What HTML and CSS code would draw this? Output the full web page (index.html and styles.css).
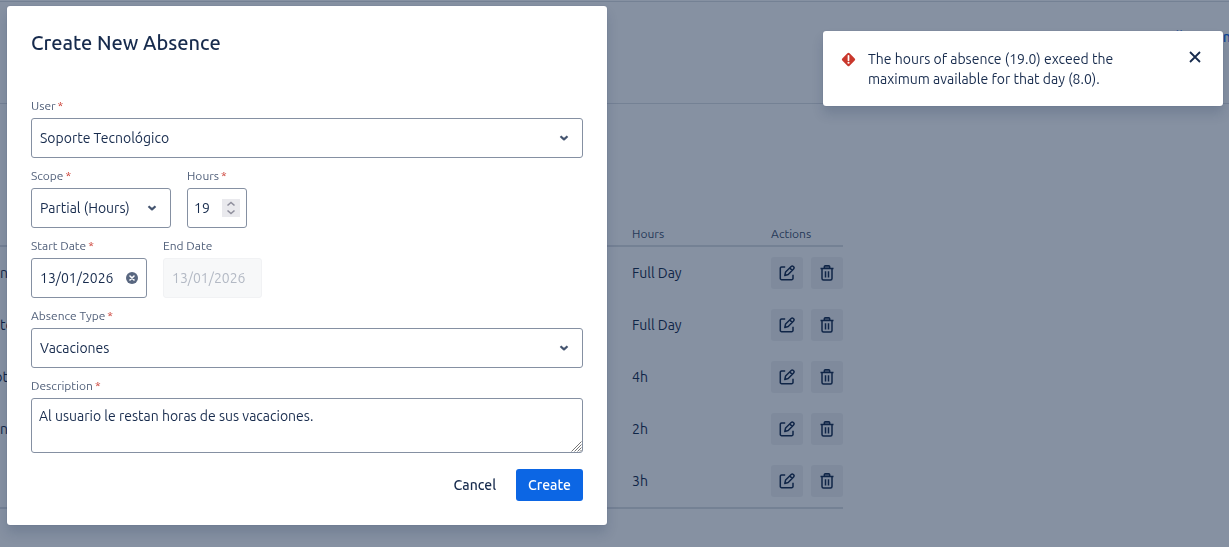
FILE: index.html
```html
<!DOCTYPE html>
<html lang="en">
<head>
    <meta charset="UTF-8">
    <title>Absences</title>
    <link rel="stylesheet" href="styles.css">
</head>
<body>
    <svg class="sprite" aria-hidden="true">
        <symbol id="icon-chevron" viewBox="0 0 10 8">
            <path d="M1.5 2.2 5 5.4 8.5 2.2" fill="none" stroke="currentColor" stroke-width="2.2" stroke-linejoin="round"/>
        </symbol>
        <symbol id="icon-edit" viewBox="0 0 16 16">
            <path d="M6.2 2H2.6a1.3 1.3 0 0 0-1.3 1.3v10.1a1.3 1.3 0 0 0 1.3 1.3h10.1a1.3 1.3 0 0 0 1.3-1.3V9.8" fill="none" stroke="currentColor" stroke-width="1.5"/>
            <path d="M5.8 10.5 6.6 7 12.2 1.5a1.5 1.5 0 0 1 2.1 0l.3.3a1.5 1.5 0 0 1 0 2.1L9.2 9.5zM10.8 3l2.4 2.4" fill="none" stroke="currentColor" stroke-width="1.5" stroke-linejoin="round"/>
        </symbol>
        <symbol id="icon-trash" viewBox="0 0 16 16">
            <path d="M1.5 3.5h13M5.3 3.5V1.8a1 1 0 0 1 1-1h3.4a1 1 0 0 1 1 1v1.7M3 3.5v10a1.5 1.5 0 0 0 1.5 1.5h7a1.5 1.5 0 0 0 1.5-1.5v-10M6.5 6.2v6.3M9.5 6.2v6.3" fill="none" stroke="currentColor" stroke-width="1.5"/>
            <path d="M5.3 1h5.4v2.5H5.3z" fill="currentColor" fill-opacity=".5"/>
        </symbol>
    </svg>

    <div class="page">
        <header class="pageHeader">
            <a class="headerLink" href="#">All season</a>
        </header>

        <main>
            <table class="absences">
                <thead>
                    <tr><th></th><th class="hoursCol">Hours</th><th class="actionsCol">Actions</th></tr>
                </thead>
                <tbody>
                    <tr>
                        <td>n</td>
                        <td>Full Day</td>
                        <td>
                            <div class="actions">
                                <button class="iconBtn" aria-label="Edit"><svg><use href="#icon-edit"/></svg></button>
                                <button class="iconBtn" aria-label="Delete"><svg><use href="#icon-trash"/></svg></button>
                            </div>
                        </td>
                    </tr>
                    <tr>
                        <td>to</td>
                        <td>Full Day</td>
                        <td>
                            <div class="actions">
                                <button class="iconBtn" aria-label="Edit"><svg><use href="#icon-edit"/></svg></button>
                                <button class="iconBtn" aria-label="Delete"><svg><use href="#icon-trash"/></svg></button>
                            </div>
                        </td>
                    </tr>
                    <tr>
                        <td><span class="clipStart">ot</span></td>
                        <td>4h</td>
                        <td>
                            <div class="actions">
                                <button class="iconBtn" aria-label="Edit"><svg><use href="#icon-edit"/></svg></button>
                                <button class="iconBtn" aria-label="Delete"><svg><use href="#icon-trash"/></svg></button>
                            </div>
                        </td>
                    </tr>
                    <tr>
                        <td>n</td>
                        <td>2h</td>
                        <td>
                            <div class="actions">
                                <button class="iconBtn" aria-label="Edit"><svg><use href="#icon-edit"/></svg></button>
                                <button class="iconBtn" aria-label="Delete"><svg><use href="#icon-trash"/></svg></button>
                            </div>
                        </td>
                    </tr>
                    <tr>
                        <td></td>
                        <td>3h</td>
                        <td>
                            <div class="actions">
                                <button class="iconBtn" aria-label="Edit"><svg><use href="#icon-edit"/></svg></button>
                                <button class="iconBtn" aria-label="Delete"><svg><use href="#icon-trash"/></svg></button>
                            </div>
                        </td>
                    </tr>
                </tbody>
            </table>
        </main>
    </div>

    <div class="overlay">
        <section class="modal" role="dialog" aria-labelledby="modalTitle">
            <h1 id="modalTitle">Create New Absence</h1>

            <form class="absenceForm" onsubmit="event.preventDefault()">
                <div class="field">
                    <label for="user">User<span class="required">*</span></label>
                    <div class="control">
                        <select id="user"><option>Soporte Tecnológico</option></select>
                        <svg class="chevron"><use href="#icon-chevron"/></svg>
                    </div>
                </div>

                <div class="row">
                    <div class="field scope">
                        <label for="scope">Scope<span class="required">*</span></label>
                        <div class="control">
                            <select id="scope"><option>Partial (Hours)</option></select>
                            <svg class="chevron"><use href="#icon-chevron"/></svg>
                        </div>
                    </div>
                    <div class="field hours">
                        <label for="hours">Hours<span class="required">*</span></label>
                        <div class="control">
                            <input type="number" id="hours" value="19">
                            <svg class="stepper" viewBox="0 0 18 18">
                                <path d="M5.5 6.5 9 3.5l3.5 3M5.5 11.5l3.5 3 3.5-3" fill="none" stroke="#8f8f9d" stroke-width="1.6"/>
                            </svg>
                        </div>
                    </div>
                </div>

                <div class="row">
                    <div class="field startDate">
                        <label for="startDate">Start Date<span class="required">*</span></label>
                        <div class="control">
                            <input type="text" id="startDate" value="13/01/2026">
                            <button type="button" class="clearBtn" aria-label="Clear">
                                <svg viewBox="0 0 12 12">
                                    <circle cx="6" cy="6" r="6" fill="#596780"/>
                                    <path d="m4 4 4 4M8 4 4 8" stroke="#fff" stroke-width="1.6" stroke-linecap="round"/>
                                </svg>
                            </button>
                        </div>
                    </div>
                    <div class="field endDate">
                        <label for="endDate">End Date</label>
                        <input type="text" id="endDate" value="13/01/2026" disabled>
                    </div>
                </div>

                <div class="field">
                    <label for="type">Absence Type<span class="required">*</span></label>
                    <div class="control">
                        <select id="type"><option>Vacaciones</option></select>
                        <svg class="chevron"><use href="#icon-chevron"/></svg>
                    </div>
                </div>

                <div class="field">
                    <label for="description">Description<span class="required">*</span></label>
                    <div class="control">
                        <textarea id="description">Al usuario le restan horas de sus vacaciones.</textarea>
                        <svg class="grip" viewBox="0 0 11 11">
                            <path d="M.5 10.5l10-10M3.5 10.5l7-7M6.5 10.5l4-4M9 10.5 10.5 9" stroke="#777" stroke-width="1"/>
                        </svg>
                    </div>
                </div>

                <div class="buttons">
                    <button type="button" class="btn">Cancel</button>
                    <button type="submit" class="btn primary">Create</button>
                </div>
            </form>
        </section>
    </div>

    <div class="toast" role="alert">
        <svg class="toastIcon" viewBox="0 0 14 14">
            <rect x="2.2" y="2.2" width="9.6" height="9.6" rx="1.4" transform="rotate(45 7 7)" fill="#c9372c"/>
            <path d="M7 3.6v4" stroke="#fff" stroke-width="1.6" stroke-linecap="round"/>
            <circle cx="7" cy="10" r="1" fill="#fff"/>
        </svg>
        <p>The hours of absence (19.0) exceed the maximum available for that day (8.0).</p>
        <button class="closeBtn" aria-label="Close">
            <svg viewBox="0 0 12 12"><path d="m1 1 10 10M11 1 1 11" stroke="currentColor" stroke-width="1.8"/></svg>
        </button>
    </div>
</body>
</html>
```

FILE: styles.css
```css
* {
    box-sizing: border-box;
}

body {
    margin: 0;
    height: 100vh;
    overflow: hidden;
    font-family: Ubuntu, 'Noto Sans', sans-serif;
    font-size: 14px;
    line-height: 20px;
    color: #172b4d;
    background-color: #fff;
}

h1, p {
    margin: 0;
}

button, input, select, textarea {
    font: inherit;
    color: inherit;
}

button {
    border: none;
    background: none;
    padding: 0;
    cursor: pointer;
}

.sprite {
    display: none;
}

/* page behind the dialog */
.pageHeader {
    display: flex;
    justify-content: flex-end;
    height: 103px;
    margin-top: 1px;
    padding-top: 25px;
    border-top: 1px solid #dcdfe4;
    border-bottom: 1px solid #dcdfe4;
}

.headerLink {
    width: 63px;
    white-space: nowrap;
    font-weight: 500;
    color: #0c66e4;
    text-decoration: none;
}

.absences {
    width: 68.6%;
    margin-top: 119px;
    border-collapse: separate;
    border-spacing: 0;
    table-layout: fixed;
}

.absences th {
    height: 24px;
    padding: 0;
    border-bottom: 2px solid #dcdfe4;
    font-size: 12px;
    font-weight: 400;
    text-align: left;
    color: #44546f;
}

.absences td {
    height: 52px;
    padding: 0;
}

.absences tbody tr:last-child td {
    height: 54px;
    border-bottom: 2px solid #dcdfe4;
}

.absences .hoursCol {
    width: 139px;
}

.absences .actionsCol {
    width: 72px;
}

/* long names lose their beginning, not their end */
.clipStart {
    display: block;
    width: 8px;
    overflow: hidden;
    direction: rtl;
}

.actions {
    display: flex;
    gap: 8px;
}

.iconBtn {
    display: flex;
    align-items: center;
    justify-content: center;
    width: 32px;
    height: 32px;
    border-radius: 3px;
    background-color: #f1f2f4;
}

.iconBtn svg {
    width: 16px;
    height: 16px;
}

/* dialog */
.overlay {
    position: fixed;
    inset: 0;
    padding: 6px 7px;
    background-color: rgba(9, 30, 66, 0.49);
}

.modal {
    max-width: 600px;
    padding: 24px;
    border-radius: 3px;
    background-color: #fff;
    box-shadow: 0 8px 12px rgba(9, 30, 66, 0.15), 0 0 1px rgba(9, 30, 66, 0.31);
}

.modal h1 {
    margin-bottom: 43px;
    font-size: 20px;
    font-weight: 500;
    line-height: 26px;
}

.absenceForm {
    display: flex;
    flex-direction: column;
    gap: 11px;
}

.row {
    display: flex;
    gap: 16px;
}

.field label {
    display: block;
    margin-bottom: 5px;
    font-size: 12px;
    line-height: 14px;
    color: #505f79;
}

.required {
    padding-left: 2px;
    color: #c9372c;
}

.scope {
    width: 140px;
}

.hours {
    width: 60px;
}

.startDate {
    width: 116px;
}

.endDate {
    width: 99px;
}

.control {
    position: relative;
}

.field input, .field select, .field textarea {
    display: block;
    width: 100%;
    height: 40px;
    padding: 0 8px;
    border: 1px solid #8590a2;
    border-radius: 3px;
    background-color: #fff;
    appearance: none;
}

.field input[type="number"] {
    padding: 0 6px;
    appearance: textfield;
}

.field input:disabled {
    border-color: #f1f2f4;
    background-color: #f7f8f9;
    color: #b3b9c4;
}

.field textarea {
    height: 55px;
    padding: 7px;
    resize: none;
}

.chevron {
    position: absolute;
    top: 16px;
    right: 14px;
    width: 10px;
    height: 8px;
    color: #44546f;
    pointer-events: none;
}

.stepper {
    position: absolute;
    top: 11px;
    right: 7px;
    width: 18px;
    height: 18px;
    background-color: #e9e9ed;
}

.clearBtn {
    position: absolute;
    top: 14px;
    right: 9px;
    display: flex;
}

.clearBtn svg, .closeBtn svg {
    width: 12px;
    height: 12px;
}

.grip {
    position: absolute;
    right: 1px;
    bottom: 1px;
    width: 11px;
    height: 11px;
}

.buttons {
    display: flex;
    justify-content: flex-end;
    gap: 8px;
    margin-top: 5px;
}

.btn {
    height: 32px;
    padding: 0 12px;
    border-radius: 3px;
    font-weight: 500;
}

.primary {
    background-color: #0c66e4;
    color: #fff;
}

/* error message */
.toast {
    position: fixed;
    top: 31px;
    right: 6px;
    display: flex;
    align-items: flex-start;
    width: 400px;
    padding: 18px 22px 17px 18px;
    border-radius: 3px;
    background-color: #fff;
    box-shadow: 0 8px 12px rgba(9, 30, 66, 0.15), 0 0 1px rgba(9, 30, 66, 0.31);
}

.toastIcon {
    flex: none;
    width: 15px;
    height: 15px;
    margin: 3px 12px 0 0;
}

.toast p {
    flex: 1;
    padding-right: 56px;
}

.closeBtn {
    display: flex;
    margin-top: 2px;
}
```
